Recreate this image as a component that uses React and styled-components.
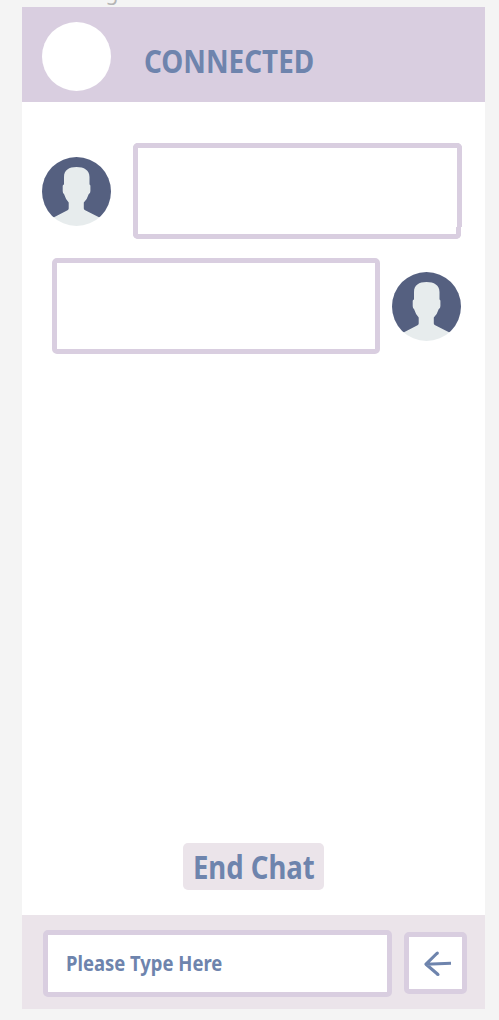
import React from "react"
import styled, { createGlobalStyle } from "styled-components"

const App = () => {
    return (
        <>
            <GlobalStyle />
            <Page>
                <Caption>g</Caption>
                <Phone>
                    <Header>
                        <Status />
                        <Title>CONNECTED</Title>
                    </Header>
                    <Messages>
                        <Message>
                            <Avatar />
                            <BubbleWrap>
                                <BubbleTop />
                                <BubbleBottom />
                            </BubbleWrap>
                        </Message>
                        <Message $own>
                            <Bubble />
                            <Avatar />
                        </Message>
                    </Messages>
                    <EndChat><Label $scale={0.86}>End Chat</Label></EndChat>
                    <Footer>
                        <Field><Label $scale={0.878}>Please Type Here</Label></Field>
                        <Send aria-label="Send">
                            <svg width="28" height="26" viewBox="0 0 28 26" fill="none">
                                <path d="M13.3 2L2 13.2L14 23.5M2 13.2L27 12.2" stroke="#6e84ad" strokeWidth="3.1" strokeLinejoin="round" />
                                <circle cx="13.4" cy="2.1" r="1.5" fill="#6e84ad" />
                                <circle cx="14" cy="23.4" r="1.5" fill="#6e84ad" />
                            </svg>
                        </Send>
                    </Footer>
                </Phone>
            </Page>
        </>
    )
}

const Avatar = () => (
    <AvatarIcon viewBox="0 0 69 69">
        <clipPath id="face">
            <circle cx="34.5" cy="34.5" r="34.5" />
        </clipPath>
        <g clipPath="url(#face)">
            <rect y="60" width="69" height="9" fill="#e7eced" />
            <rect width="69" height="60.3" fill="#556080" />
            <path
                d="M34.5 10C27 10 22 13 22 20V27.5Q20.7 27.7 20.7 29V34Q20.7 36.5 22 37Q23.5 42 26.7 45.5V51.5Q26.7 52.5 25.5 53.2L12 60.3V61H57V60.3L43.2 53.2Q41.8 52.5 41.8 51.5V45.5Q45.3 42 46.8 37Q48.4 36.5 48.4 34V29Q48.4 27.7 47.5 27.5V20C47.5 13 42 10 34.5 10Z"
                fill="#e7eced"
            />
        </g>
    </AvatarIcon>
)

const GlobalStyle = createGlobalStyle`
    * {
        box-sizing: border-box;
    }
    body {
        margin: 0;
        background: #f4f4f4;
        font-family: "Noto Sans", "Open Sans", sans-serif;
    }
`

const Page = styled.div`
    height: 1020px;
    overflow: hidden;
    padding: 0 14px 0 22.4px;
`

const Caption = styled.div`
    height: 7.4px;
    padding-left: 83px;
    font-size: 21px;
    line-height: 0;
    color: #b5b5b5;
    margin-top: -8px;
    margin-bottom: 8px;
`

const Phone = styled.div`
    display: flex;
    flex-direction: column;
    height: 1002px;
    background: #fff;
`

const Header = styled.div`
    display: flex;
    height: 94.6px;
    padding: 14.7px 20px 0;
    background: #d9cee0;
`

const Status = styled.div`
    width: 69px;
    height: 69px;
    border-radius: 50%;
    background: #fff;
`

const Title = styled.div`
    margin: 16px 0 0 33px;
    font-size: 32px;
    font-weight: 700;
    line-height: 46px;
    color: #6e84ad;
    transform: scaleX(0.87);
    transform-origin: left;
`

const Messages = styled.div`
    display: flex;
    flex-direction: column;
    gap: 18.5px;
    padding: 41px 23.4px 0 20px;
`

const Message = styled.div`
    display: flex;
    align-items: center;
    justify-content: space-between;
    padding: ${({ $own }) => ($own ? "0 0.6px 0 9.4px" : "0")};
`

const AvatarIcon = styled.svg`
    width: 69px;
    height: 69px;
    flex-shrink: 0;
`

const Bubble = styled.div`
    width: 328px;
    height: 96.5px;
    border: 5.5px solid #d9cee0;
    border-radius: 5px;
    background: #fff;
`

const BubbleWrap = styled.div`
    display: flex;
    flex-direction: column;
    align-items: center;
    width: 329px;
`

const BubbleTop = styled.div`
    width: 329px;
    height: 84px;
    border: 5.5px solid #d9cee0;
    border-bottom: none;
    border-radius: 5px 5px 0 0;
`

const BubbleBottom = styled.div`
    width: 327.6px;
    height: 12.5px;
    border: 5.5px solid #d9cee0;
    border-top: none;
    border-radius: 0 0 5px 5px;
`

const Label = styled.span`
    white-space: nowrap;
    transform: scaleX(${({ $scale }) => $scale});
`

const EndChat = styled.button`
    display: flex;
    align-items: center;
    justify-content: center;
    width: 141px;
    height: 47px;
    margin: auto 0 25px 160.6px;
    padding: 0;
    border: none;
    border-radius: 5px;
    background: #ebe4ea;
    color: #6e84ad;
    font: 700 32px "Noto Sans", sans-serif;
`

const Footer = styled.div`
    display: flex;
    gap: 12px;
    height: 94.5px;
    padding: 15px 0 0 20.6px;
    background: #ebe4ea;
`

const Field = styled.div`
    display: flex;
    align-items: center;
    width: 349px;
    height: 67.5px;
    padding: 0 0 2px 18.5px;
    border: 5.5px solid #d9cee0;
    border-radius: 5px;
    background: #fff;
    color: #6e84ad;
    font-size: 21px;
    font-weight: 700;

    ${Label} {
        transform-origin: left;
    }
`

const Send = styled.button`
    display: flex;
    align-items: center;
    justify-content: center;
    width: 63.5px;
    height: 62px;
    margin-top: 2px;
    padding: 2px 0 0 5px;
    border: 5.5px solid #d9cee0;
    border-radius: 5px;
    background: #fff;
`

export default App
